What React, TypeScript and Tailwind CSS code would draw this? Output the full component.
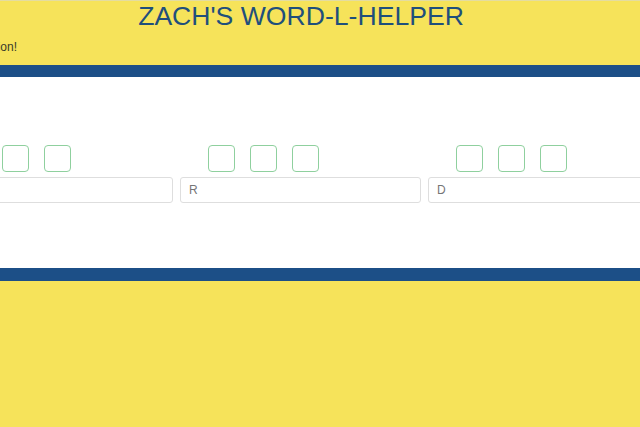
import React from "react";

const cols = ["", "R", "D"];

export default function App() {
  return (
    <div className="w-[640px] h-[427px] overflow-hidden bg-[#f6e35a] flex flex-col" style={{ fontFamily: '"Liberation Sans", Arial, sans-serif' }}>
      <header className="h-[65px] shrink-0 border-t border-[#e4dca0] flex flex-col">
        <div className="flex justify-center pr-[38px]">
          <h1 className="text-[26.6px] leading-[31px] text-[#1f4f7c] whitespace-nowrap">ZACH'S WORD-L-HELPER</h1>
        </div>
        <div className="flex justify-end w-[17px] mt-[8px]">
          <p className="text-[12px] leading-[14px] text-[#3a3a2a] whitespace-nowrap">Enter your letters to find a solution!</p>
        </div>
      </header>
      <div className="h-[12px] shrink-0 bg-[#1c4f87]" />
      <main className="h-[191px] shrink-0 bg-white overflow-hidden">
        <div className="flex gap-[7px] ml-[-68px] pt-[68px]">
          {cols.map((c, i) => (
            <div key={i} className="w-[241px] shrink-0 flex flex-col gap-[5px]">
              <div className="flex gap-[15px] pl-[28px]">
                {[0, 1, 2].map((b) => (
                  <div key={b} className="w-[27px] h-[27px] rounded-[4px] border-[1.5px] border-solid border-[color:#8fd09e] bg-white" />
                ))}
              </div>
              <div className="h-[26px] rounded-[3px] border border-solid border-[color:#dedede] bg-white flex items-center pl-[8px]">
                <span className="text-[12px] text-[#757575]">{c}</span>
              </div>
            </div>
          ))}
        </div>
      </main>
      <div className="h-[13px] shrink-0 bg-[#1c4f87]" />
      <div className="flex-1" />
    </div>
  );
}
